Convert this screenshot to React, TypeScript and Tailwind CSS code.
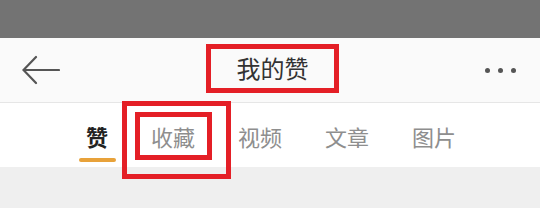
import React from 'react';

const tabs = ['赞', '收藏', '视频', '文章', '图片'];

const Mark: React.FC<{ className: string }> = ({ className }) => (
  <div className={`absolute border-[5px] border-[#e41f26] pointer-events-none ${className}`} />
);

export default function App() {
  return (
    <div className="relative w-[540px] h-[208px] overflow-hidden bg-[#efefef] font-['Noto_Sans_CJK_SC','Noto_Sans',sans-serif]">
      {/* status bar */}
      <div className="h-[38px] bg-[#737373]" />

      {/* header */}
      <div className="h-[65px] bg-[#fafafa] border-b border-[#e6e6e6] flex items-center justify-between pl-[22px] pr-[24px]">
        <svg width="38" height="30" viewBox="0 0 38 30" fill="none" stroke="#555" strokeWidth="2.2" strokeLinecap="round">
          <path d="M37 15H2M14 2L1.5 15L14 28" />
        </svg>
        <span className="text-[24px] leading-none text-[#333] -mt-[4px]">我的赞</span>
        <div className="flex gap-[8px] items-center">
          <span className="w-[5px] h-[5px] rounded-full bg-[#555]" />
          <span className="w-[5px] h-[5px] rounded-full bg-[#555]" />
          <span className="w-[5px] h-[5px] rounded-full bg-[#555]" />
        </div>
      </div>

      {/* tabs */}
      <div className="h-[64px] bg-white flex items-start pl-[86px] gap-[43px]">
        {tabs.map((t, i) => (
          <div key={t} className="relative flex flex-col items-center pt-[20px]">
            <span
              className={`text-[22px] leading-[26px] ${i === 0 ? 'font-bold text-[#222]' : 'text-[#8e8e8e]'}`}
            >
              {t}
            </span>
            {i === 0 && (
              <span className="absolute top-[55px] w-[37px] h-[4px] rounded-full bg-[#e8a23a]" />
            )}
          </div>
        ))}
      </div>

      {/* annotation boxes */}
      <Mark className="left-[206px] top-[44px] w-[133px] h-[49px]" />
      <Mark className="left-[122px] top-[101px] w-[109px] h-[78px]" />
      <Mark className="left-[135px] top-[112px] w-[77px] h-[48px]" />
    </div>
  );
}
